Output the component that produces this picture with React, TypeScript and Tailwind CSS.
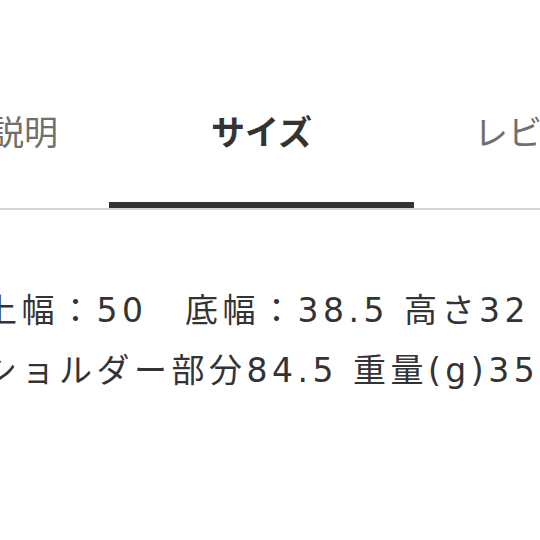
import React from "react";

type Tab = {
  label: string;
  width: string;
  active?: boolean;
};

const TABS: Tab[] = [
  { label: "商品説明", width: "w-[238px]" },
  { label: "サイズ", width: "w-[305px]", active: true },
  { label: "レビュー", width: "w-[256px]" },
];

const SIZE_LINES = ["上幅：50　底幅：38.5 高さ32", "ショルダー部分84.5 重量(g)35"];

const App: React.FC = () => {
  return (
    <div
      className="w-[540px] h-[540px] bg-white overflow-hidden"
      style={{ fontFamily: '"Noto Sans CJK JP", "Noto Sans", sans-serif' }}
    >
      {/* tab bar */}
      <div className="pt-[109px] border-b-2 border-[#d6d6d6]">
        <div className="flex -ml-[129px] w-max">
          {TABS.map((t) => (
            <div key={t.label} className={`${t.width} flex flex-col items-center`}>
              <span
                className={
                  t.active
                    ? "text-[34px] leading-[44px] font-bold text-[#333333]"
                    : "text-[34px] leading-[44px] text-[#6f6f6f]"
                }
              >
                {t.label}
              </span>
              <div className={t.active ? "mt-[49px] h-[6px] w-full bg-[#333333]" : "mt-[49px] h-[6px] w-full"} />
            </div>
          ))}
        </div>
      </div>

      {/* size details: latin glyphs are wider in the original, so DejaVu goes first */}
      <div
        className="pt-[71px] -ml-[16px] text-[33px] leading-[60px] tracking-[4.5px] text-[#333333]"
        style={{ fontFamily: '"DejaVu Sans", "Noto Sans CJK JP", sans-serif' }}
      >
        {SIZE_LINES.map((line) => (
          <p key={line} className="whitespace-nowrap">
            {line}
          </p>
        ))}
      </div>
    </div>
  );
};

export default App;
